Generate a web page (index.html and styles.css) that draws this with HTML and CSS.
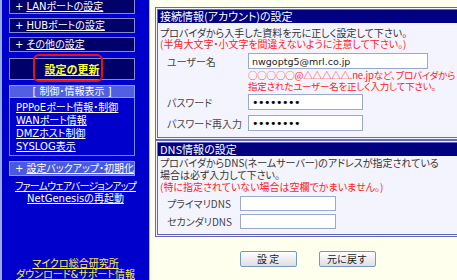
FILE: index.html
```html
<!DOCTYPE html>
<html lang="ja">
  <head>
    <meta charset="UTF-8" />
    <title>接続情報の設定</title>
    <link rel="stylesheet" href="styles.css">
  </head>
  <body>
    <div id="page">
      <div id="side">
        <div class="menu first"><span class="plus">+</span><a href="#">LANポートの設定</a></div>
        <div class="menu"><span class="plus">+</span><a href="#">HUBポートの設定</a></div>
        <div class="menu"><span class="plus">+</span><a href="#">その他の設定</a></div>
        <div class="update">
          <a href="#">設定の更新</a>
          <span class="ring"></span>
        </div>
        <div class="group-title">[ 制御・情報表示 ]</div>
        <ul class="group-links">
          <li><a href="#">PPPoEポート情報・制御</a></li>
          <li><a href="#">WANポート情報</a></li>
          <li><a href="#">DMZホスト制御</a></li>
          <li><a href="#">SYSLOG表示</a></li>
        </ul>
        <div class="menu light"><span class="plus">+</span><a href="#">設定バックアップ・初期化</a></div>
        <div class="extra">
          <a href="#" class="tight">ファームウェアバージョンアップ</a>
          <a href="#">NetGenesisの再起動</a>
        </div>
        <div class="vendor">
          <a href="#">マイクロ総合研究所</a>
          <a href="#">ダウンロード&amp;サポート情報</a>
        </div>
      </div>

      <div id="main">
        <div class="panel">
          <div class="panel-head">接続情報(アカウント)の設定</div>
          <div class="panel-body">
            <p>プロバイダから入手した資料を元に正しく設定して下さい。</p>
            <p class="red">(半角大文字・小文字を間違えないように注意して下さい。)</p>
            <div class="form">
              <label>ユーザー名</label>
              <input type="text" class="wide" value="nwgoptg5@mrl.co.jp" />
              <span></span>
              <p class="red note">○○○○○@△△△△△.ne.jpなど、プロバイダから<br />指定されたユーザー名を正しく入力して下さい。</p>
              <label>パスワード</label>
              <input type="password" class="mid" value="password" />
              <label>パスワード再入力</label>
              <input type="password" class="mid" value="password" />
            </div>
          </div>
        </div>

        <div class="panel">
          <div class="panel-head">DNS情報の設定</div>
          <div class="panel-body dns-body">
            <p>プロバイダからDNS(ネームサーバー)のアドレスが指定されている<br />場合は必ず入力して下さい。</p>
            <p class="red">(特に指定されていない場合は空欄でかまいません。)</p>
            <div class="form dns">
              <label>プライマリDNS</label>
              <input type="text" class="short" />
              <label>セカンダリDNS</label>
              <input type="text" class="short" />
            </div>
          </div>
        </div>

        <div class="buttons">
          <button>設 定</button>
          <button>元に戻す</button>
        </div>
      </div>
    </div>
  </body>
</html>
```

FILE: styles.css
```css
body {
  margin: 0;
  font-family: "Noto Sans CJK JP", "Noto Sans", sans-serif;
  font-size: 10px;
  font-feature-settings: "palt";
  background-color: #ffffee;
}
#page {
  display: flex;
  height: 280px;
  overflow: hidden;
}

/* サイドメニュー */
#side {
  width: 147px;
  flex: none;
  background-color: #0000cc;
  border-left: 2px solid #99aadd;
  border-right: 1px solid #aab8ff;
  display: flex;
  flex-direction: column;
  color: white;
  font-family: "DejaVu Sans", "Noto Sans CJK JP", sans-serif;
  font-size: 10px;
}
#side a {
  color: white;
}
.menu {
  box-sizing: border-box;
  margin: 0 0 4px 7px;
  width: 126px;
  height: 15px;
  line-height: 13px;
  background-color: #00006a;
  border: 1px solid #8888cc;
  padding-left: 5px;
  white-space: nowrap;
}
.menu.first {
  margin-top: -1px;
}
.plus {
  margin-right: 3px;
}
.menu.light {
  background-color: #4a5ae0;
  border-color: #8899ee;
  margin-top: 5px;
  margin-bottom: 5px;
}
.update {
  box-sizing: border-box;
  position: relative;
  margin: 2px 0 0 7px;
  width: 126px;
  height: 22px;
  line-height: 20px;
  background-color: #00006a;
  border: 1px solid #8888cc;
  text-align: center;
}
.update a {
  color: #ffff33 !important;
  font-family: "Noto Sans CJK JP", sans-serif;
  font-weight: bold;
  font-size: 11px;
}
.ring {
  box-sizing: border-box;
  position: absolute;
  left: 23px;
  top: -5px;
  width: 70px;
  height: 28px;
  border: 2px solid #ee1111;
  border-radius: 6px;
}
.group-title {
  box-sizing: border-box;
  margin: 5px 0 0 7px;
  width: 126px;
  height: 13px;
  line-height: 11px;
  background-color: #5060e0;
  border: 1px solid #8899ee;
  text-align: center;
}
.group-links {
  box-sizing: border-box;
  list-style: none;
  margin: 0 0 0 7px;
  width: 126px;
  padding: 3px 0 2px 6px;
  border: 1px solid #7788dd;
  border-top: none;
}
.group-links li {
  height: 13px;
  line-height: 13px;
}
.extra {
  display: flex;
  flex-direction: column;
  align-items: center;
  line-height: 12px;
}
.tight {
  letter-spacing: -0.8px;
}
.vendor {
  display: flex;
  flex-direction: column;
  align-items: center;
  margin-top: auto;
  line-height: 11px;
}
.vendor a {
  color: #ffee44 !important;
}

/* 設定パネル */
#main {
  flex: 1;
  padding: 7px 5px 0 5px;
}
.panel {
  border: 3px double #6666bb;
  background-color: #f4f4ff;
}
.panel-head {
  background-color: #000080;
  color: white;
  font-size: 11px;
  height: 13px;
  line-height: 13px;
  padding-left: 2px;
}
.panel-body {
  padding: 4px 2px 6px 2px;
  color: #333333;
}
.panel-body p {
  margin: 0;
  line-height: 11px;
}
.dns-body {
  padding-top: 1px;
  padding-bottom: 5px;
}
.dns-body p {
  line-height: 12px;
}
.red {
  color: #ff2222;
}
.form {
  display: grid;
  grid-template-columns: 81px auto;
  align-items: center;
  row-gap: 5px;
  padding: 4px 0 0 7px;
}
.form label {
  font-size: 10px;
  color: #444444;
  white-space: nowrap;
}
.panel-body .note {
  font-size: 9.5px;
  letter-spacing: -0.2px;
  white-space: nowrap;
  line-height: 11px;
  margin: -4px 0 -3px 0;
}
.form.dns {
  grid-template-columns: 73px auto;
  row-gap: 3px;
  padding-top: 3px;
}
.form input {
  height: 16px;
  box-sizing: border-box;
  border: 1px solid #99aacc;
  background: white;
  padding: 0 3px;
  font-family: "DejaVu Sans", sans-serif;
  font-size: 9.5px;
  color: #222222;
}
.form.dns input {
  height: 15px;
}
.form input[type="password"] {
  font-size: 11px;
  letter-spacing: -0.5px;
  color: #000000;
}
.wide {
  width: 180px;
}
.mid {
  width: 115px;
}
.short {
  width: 96px;
}
.buttons {
  display: flex;
  justify-content: center;
  gap: 22px;
  padding-top: 14px;
}
.buttons button {
  width: 57px;
  height: 16px;
  padding: 0;
  font-family: "Noto Sans CJK JP", sans-serif;
  font-size: 10px;
  line-height: 14px;
  border: 1px solid #7799bb;
  border-radius: 2px;
  background: linear-gradient(#ffffff, #dddde4);
  color: #222222;
}
```
